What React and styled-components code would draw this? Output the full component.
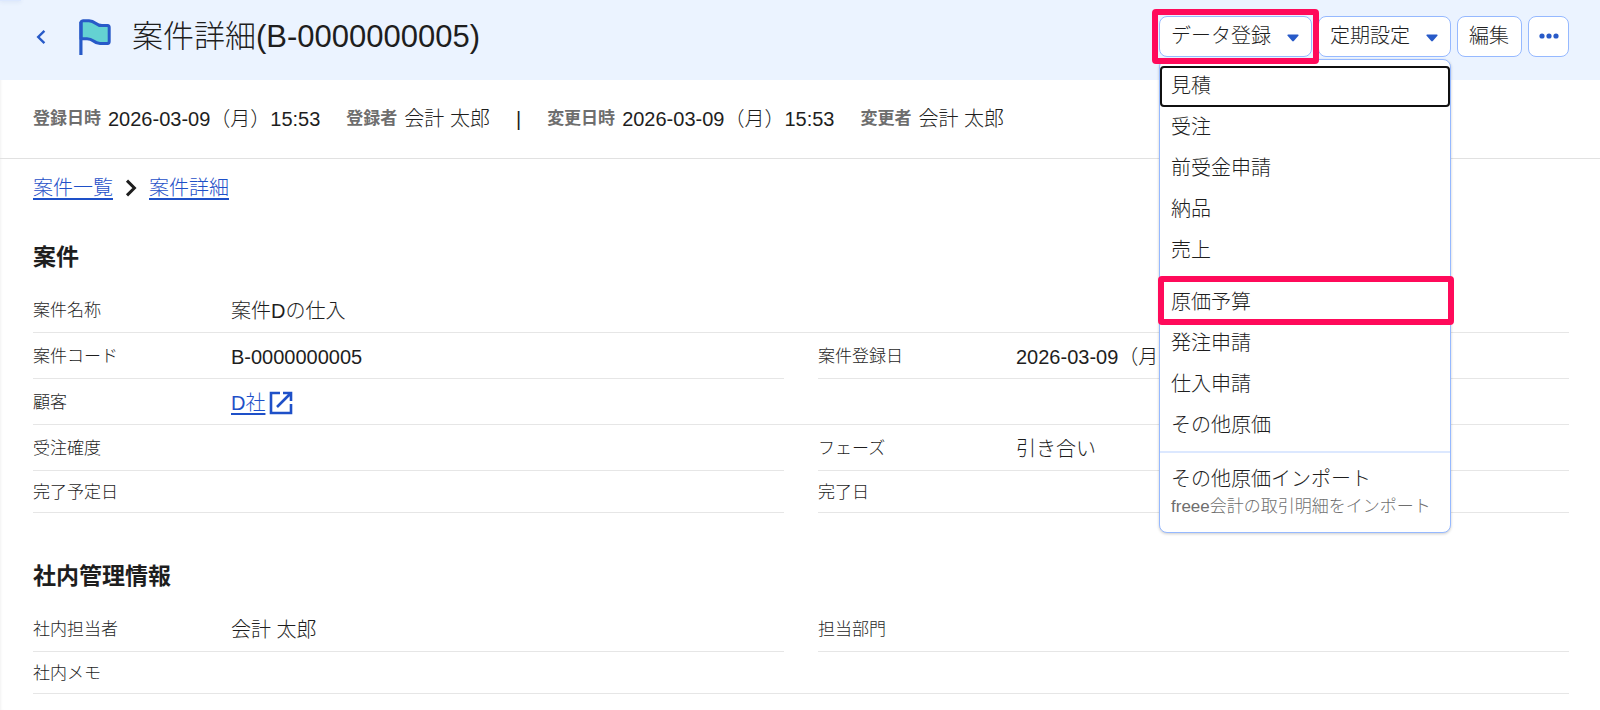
import React from 'react'
import styled, { createGlobalStyle, css } from "styled-components";


const App = () => {
    return (
        <Page>
            <GlobalStyle />

            <Header>
                <BackLink href="#" aria-label="戻る">
                    <svg width="10" height="16" viewBox="0 0 10 16" fill="none" stroke="#285ac8" strokeWidth="2.4">
                        <path d="M8.4 1.8 2.2 8l6.2 6.2" />
                    </svg>
                </BackLink>
                <FlagIcon />
                <Title>案件詳細(B-0000000005)</Title>

                <Actions>
                    <MenuWrapper>
                        <ActionButton $marked aria-haspopup="menu" aria-expanded="true">
                            データ登録 <Caret />
                        </ActionButton>
                        <Menu role="menu">
                            <MenuGroup>
                                <MenuItem role="menuitem" $focused>見積</MenuItem>
                                <MenuItem role="menuitem">受注</MenuItem>
                                <MenuItem role="menuitem">前受金申請</MenuItem>
                                <MenuItem role="menuitem">納品</MenuItem>
                                <MenuItem role="menuitem">売上</MenuItem>
                            </MenuGroup>
                            <MenuGroup>
                                <MenuItem role="menuitem" $marked>原価予算</MenuItem>
                                <MenuItem role="menuitem">発注申請</MenuItem>
                                <MenuItem role="menuitem">仕入申請</MenuItem>
                                <MenuItem role="menuitem">その他原価</MenuItem>
                            </MenuGroup>
                            <MenuGroup $divided>
                                <MenuItem role="menuitem">
                                    その他原価インポート
                                    <MenuNote>freee会計の取引明細をインポート</MenuNote>
                                </MenuItem>
                            </MenuGroup>
                        </Menu>
                    </MenuWrapper>
                    <ActionButton aria-haspopup="menu">定期設定 <Caret /></ActionButton>
                    <ActionButton>編集</ActionButton>
                    <MoreButton aria-label="その他">
                        <svg width="20" height="6" viewBox="0 0 20 6" fill="#285ac8">
                            <circle cx="3" cy="3" r="2.6" />
                            <circle cx="10" cy="3" r="2.6" />
                            <circle cx="17" cy="3" r="2.6" />
                        </svg>
                    </MoreButton>
                </Actions>
            </Header>

            <Meta>
                <MetaItem><MetaLabel>登録日時</MetaLabel>2026-03-09（月）15:53</MetaItem>
                <MetaItem><MetaLabel>登録者</MetaLabel>会計 太郎</MetaItem>
                <MetaItem>|</MetaItem>
                <MetaItem><MetaLabel>変更日時</MetaLabel>2026-03-09（月）15:53</MetaItem>
                <MetaItem><MetaLabel>変更者</MetaLabel>会計 太郎</MetaItem>
            </Meta>

            <Content>
                <Breadcrumb>
                    <TextLink href="#">案件一覧</TextLink>
                    <svg width="14" height="18" viewBox="0 0 14 18" fill="none" stroke="#1e1e1e" strokeWidth="3">
                        <path d="M3 1.6l7.4 7.4L3 16.4" />
                    </svg>
                    <TextLink href="#">案件詳細</TextLink>
                </Breadcrumb>

                <Section>
                    <SectionTitle>案件</SectionTitle>
                    <Fields>
                        <Field $wide><Label>案件名称</Label><Value>案件Dの仕入</Value></Field>
                        <Field><Label>案件コード</Label><Value>B-0000000005</Value></Field>
                        <Field><Label>案件登録日</Label><Value>2026-03-09（月）</Value></Field>
                        <Field $wide>
                            <Label>顧客</Label>
                            <Value><TextLink href="#">D社</TextLink><ExternalIcon /></Value>
                        </Field>
                        <Field><Label>受注確度</Label><Value /></Field>
                        <Field><Label>フェーズ</Label><Value>引き合い</Value></Field>
                        <Field $short><Label>完了予定日</Label><Value /></Field>
                        <Field $short><Label>完了日</Label><Value /></Field>
                    </Fields>
                </Section>

                <Section>
                    <SectionTitle>社内管理情報</SectionTitle>
                    <Fields>
                        <Field><Label>社内担当者</Label><Value>会計 太郎</Value></Field>
                        <Field><Label>担当部門</Label><Value /></Field>
                        <Field $wide $short><Label>社内メモ</Label><Value /></Field>
                    </Fields>
                </Section>
            </Content>
        </Page>
    )
}

const FlagIcon = () => (
    <Flag width="34" height="38" viewBox="0 0 34 38" fill="none" stroke="#285ac8" strokeLinejoin="round">
        <path
            d="M3 4Q3.4 2.8 5 2.7H11Q14.5 2.9 17.5 5.2Q20.5 7.6 24 7.6H29.5Q31.2 7.8 31.2 9.5V23.5Q31.2 25.3 29.5 25.5H22Q18.5 25.5 15.5 23Q12.5 20.7 9 20.7H3Z"
            fill="#64d2d2"
            strokeWidth="3"
        />
        <path d="M2.9 4V37" strokeWidth="3.2" />
    </Flag>
)

const Caret = () => (
    <CaretSvg width="12" height="8" viewBox="0 0 12 8" fill="#285ac8">
        <path d="M1 .5h10q1 .2.4 1.2L6.8 7q-.8.8-1.6 0L.6 1.7Q0 .7 1 .5z" />
    </CaretSvg>
)

const ExternalIcon = () => (
    <svg width="24" height="24" viewBox="0 0 24 24" fill="none" stroke="#1e50c8" strokeWidth="2.6">
        <path d="M11 2H2v20h20v-9" />
        <path d="M14 2h8v8M22 2 8 16" />
    </svg>
)

const marker = css`
&::after{
  content: "";
  position: absolute;
  z-index: 3;
  border: 6px solid #ff0a5a;
  border-radius: 4px;
  pointer-events: none;
}
`

const GlobalStyle = createGlobalStyle`
*{
  box-sizing: border-box;
}

body{
  margin: 0;
  background: #fff;
  color: #1e1e1e;
  font-family: "Liberation Sans", "Noto Sans CJK JP", sans-serif;
  font-size: 20px;
  font-weight: 300;
  line-height: 30px;
}

button{
  font: inherit;
  color: inherit;
  cursor: pointer;
}
`

const Page = styled.div`
min-height: 100vh;
box-shadow: inset 3px 0 3px -2px #f2f2f2;
`

const Header = styled.header`
position: relative;
display: flex;
align-items: center;
height: 80px;
padding: 0 31px 6px 36px;
background: #ebf3ff;

&::before{
  content: "";
  position: absolute;
  top: 0;
  left: 0;
  width: 21px;
  height: 1px;
  background: #dce8ff;
  box-shadow: 0 0 4px rgba(60, 90, 160, 0.3);
}
`

const BackLink = styled.a`
display: flex;
margin-right: 32px;
`

const Flag = styled.svg`
margin-right: 20px;
`

const CaretSvg = styled.svg`
margin-top: 3px;
`

const Title = styled.h1`
margin: 0;
font-size: 31px;
font-weight: 300;
line-height: 40px;
`

const Actions = styled.div`
display: flex;
gap: 6px;
margin: 0 0 2px auto;
`

const MenuWrapper = styled.div`
position: relative;
`

const ActionButton = styled.button`
position: relative;
display: flex;
align-items: center;
gap: 16px;
height: 41px;
padding: 0 12px 0 11px;
border: 1px solid #96b9ff;
border-radius: 8px;
background: #fff;
white-space: nowrap;

${({ $marked }) => $marked && css`
  ${marker}
  &::after{
    inset: -8px;
  }
`}
`

const MoreButton = styled(ActionButton)`
justify-content: center;
width: 41px;
padding: 0;
`

const Menu = styled.div`
position: absolute;
z-index: 2;
top: 43px;
left: 0;
width: 292px;
padding: 6px 0;
border: 1px solid #96b9ff;
border-radius: 8px;
background: #fff;
box-shadow: 0 1px 3px rgba(0, 0, 0, 0.2);
`

const MenuGroup = styled.div`
& + &{
  margin-top: 11px;
}

${({ $divided }) => $divided && css`
  && {
    margin-top: 5px;
    padding-top: 6px;
    border-top: 2px solid #dce8ff;
  }
`}
`

const MenuItem = styled.button`
position: relative;
display: block;
width: 100%;
min-height: 41px;
padding: 5px 11px 6px;
border: 0;
border-radius: 4px;
background: #fff;
text-align: left;
white-space: nowrap;

${({ $focused }) => $focused && css`
  outline: 2px solid #101010;
  outline-offset: -2px;
`}

${({ $marked }) => $marked && css`
  ${marker}
  &::after{
    inset: -6px -4px -2px -2px;
  }
`}
`

const MenuNote = styled.small`
display: block;
color: #6e6e6e;
font-size: 17px;
line-height: 26px;
`

const Meta = styled.div`
display: flex;
align-items: center;
gap: 26px;
height: 79px;
padding: 0 33px;
border-bottom: 1px solid #e1e1e1;
white-space: nowrap;
`

const MetaItem = styled.span`
display: flex;
align-items: center;
gap: 7px;
`

const MetaLabel = styled.span`
color: #6e6e6e;
font-size: 17px;
font-weight: 700;
`

const Content = styled.main`
padding: 14px 31px 16px 33px;
`

const Breadcrumb = styled.nav`
display: flex;
align-items: center;
gap: 11px;
`

const TextLink = styled.a`
color: #1e50c8;
text-underline-offset: 3px;
`

const Section = styled.section`
margin-top: 39px;

& + &{
  margin-top: 48px;
}
`

const SectionTitle = styled.h2`
margin: 0 0 15px;
font-size: 23px;
font-weight: 700;
line-height: 30px;
`

const Fields = styled.dl`
display: grid;
grid-template-columns: 1fr 1fr;
column-gap: 34px;
margin: 0;
`

const Field = styled.div`
display: flex;
align-items: center;
height: ${({ $short }) => $short ? "42px" : "46px"};
padding-top: 2px;
grid-column: ${({ $wide }) => $wide ? "1 / -1" : "auto"};
border-bottom: 1px solid #e6e6e6;
`

const Label = styled.dt`
flex: 0 0 198px;
font-size: 17px;
`

const Value = styled.dd`
display: flex;
align-items: center;
gap: 4px;
margin: 0;
white-space: nowrap;
`


export default App
